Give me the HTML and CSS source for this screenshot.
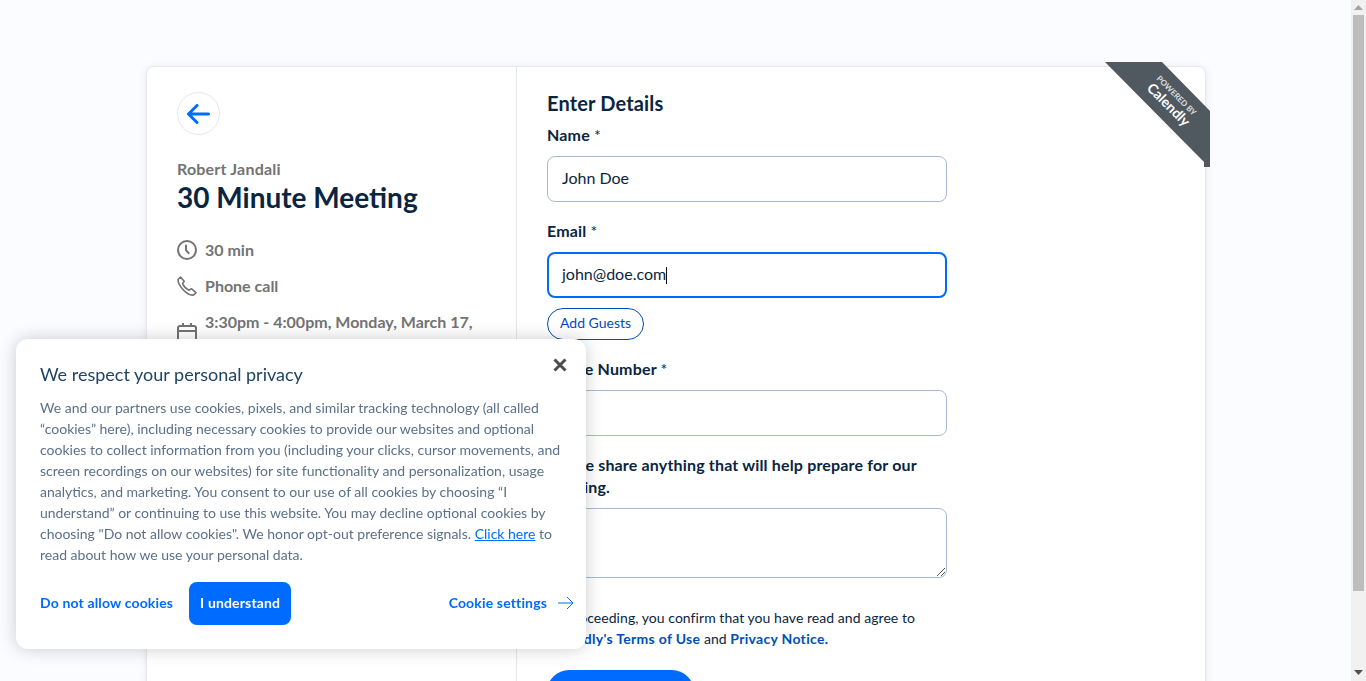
FILE: index.html
```html
<!DOCTYPE html>
<html lang="en">
<head>
  <meta charset="UTF-8" />
  <meta name="viewport" content="width=device-width, initial-scale=1" />
  <title>Enter Details - Calendly</title>
  <link rel="stylesheet" href="styles.css">
</head>
<body>
  <div class="page">
    <div class="card">
      <aside class="summary">
        <button class="back" aria-label="Back">
          <svg width="24" height="20" viewBox="0 0 24 20" fill="none" stroke="#006bff" stroke-width="3" stroke-linecap="round" stroke-linejoin="round"><path d="M1.5 10h20M10 1.5L1.5 10l8.5 8.5"/></svg>
        </button>
        <p class="host">Robert Jandali</p>
        <h1>30 Minute Meeting</h1>
        <div class="meta">
          <svg width="20" height="20" viewBox="0 0 20 20" fill="none" stroke="#737373" stroke-width="2" stroke-linecap="round"><circle cx="10" cy="10" r="9"/><path d="M9 5.5v4.7l2.6 3"/></svg>
          <span>30 min</span>
        </div>
        <div class="meta">
          <svg width="20" height="20" viewBox="0 0 20 20" fill="none" stroke="#737373" stroke-width="1.6" stroke-linejoin="round"><path d="M1 3.5 3.5 1l3.7 4.2-1.6 2.2c1 2.7 3.6 5.6 6.6 6.8l2.2-1.5 4.6 3.9-2.2 2.4c-3 .6-7.3-1.6-10.6-5.2C3 10.3 1 6.6 1 3.5z"/></svg>
          <span>Phone call</span>
        </div>
        <div class="meta meta-date">
          <svg width="20" height="20" viewBox="0 0 20 20" fill="none" stroke="#737373" stroke-width="2"><rect x="1" y="3" width="18" height="16" rx="2"/><path d="M1 8h18M6 0v4M14 0v4"/></svg>
          <span>3:30pm - 4:00pm, Monday, March 17, 2025</span>
        </div>
      </aside>

      <form class="details">
        <h2>Enter Details</h2>
        <label class="field-label">Name <i>*</i></label>
        <div class="input">John Doe</div>
        <label class="field-label">Email <i>*</i></label>
        <div class="input input-focus">john@doe.com<b class="caret"></b></div>
        <button type="button" class="add-guests">Add Guests</button>
        <label class="field-label">Phone Number <i>*</i></label>
        <div class="input"></div>
        <label class="field-label">Please share anything that will help prepare for our meeting.</label>
        <div class="input textarea">
          <svg class="grip" width="10" height="10" viewBox="0 0 10 10" stroke="#555" stroke-width="1"><path d="M1 9l8-8M5 9l4-4"/></svg>
        </div>
        <p class="terms">By proceeding, you confirm that you have read and agree to <a href="#">Calendly's Terms of Use</a> and <a href="#">Privacy Notice.</a></p>
        <button type="button" class="schedule">Schedule Event</button>
      </form>
    </div>

    <svg class="ribbon" width="105" height="105" viewBox="0 0 105 105">
      <path d="M0 0h57l48 49v56h-6v-5L0 0z" fill="#505860"/>
      <text class="ribbon-small" transform="translate(51 17) rotate(45)">POWERED BY</text>
      <text class="ribbon-big" transform="translate(41 27) rotate(45)">Calendly</text>
    </svg>
  </div>

  <div class="scrollbar">
    <svg class="arrow" width="9" height="5" viewBox="0 0 9 5"><path d="M4.5 0L9 5H0z" fill="#a3a3a3"/></svg>
    <div class="track"><div class="thumb"></div></div>
    <svg class="arrow" width="9" height="5" viewBox="0 0 9 5"><path d="M0 0h9L4.5 5z" fill="#505050"/></svg>
  </div>

  <section class="cookies">
    <button class="cookies-close" aria-label="Close">
      <svg width="14" height="14" viewBox="0 0 14 14" stroke="#4d4d4d" stroke-width="3"><path d="M1.5 1.5l11 11M12.5 1.5l-11 11"/></svg>
    </button>
    <h3>We respect your personal privacy</h3>
    <p>We and our partners use cookies, pixels, and similar tracking technology (all called “cookies” here), including necessary cookies to provide our websites and optional cookies to collect information from you (including your clicks, cursor movements, and screen recordings on our websites) for site functionality and personalization, usage analytics, and marketing. You consent to our use of all cookies by choosing “I understand” or continuing to use this website. You may decline optional cookies by choosing "Do not allow cookies". We honor opt-out preference signals. <a href="#">Click here</a> to read about how we use your personal data.</p>
    <div class="cookies-actions">
      <a class="deny" href="#">Do not allow cookies</a>
      <button class="accept">I understand</button>
      <a class="settings" href="#">Cookie settings
        <svg width="16" height="14" viewBox="0 0 16 14" fill="none" stroke="#006bff" stroke-width="1"><path d="M0 7h15M9 1l6 6-6 6"/></svg>
      </a>
    </div>
  </section>
</body>
</html>
```

FILE: styles.css
```css
* {
  box-sizing: border-box;
}
html, body {
  height: 100%;
  margin: 0;
  overflow: hidden;
}
body {
  display: flex;
  font-family: Lato, Arial, sans-serif;
  background: #fbfcff;
  color: #0a2540;
}
.page {
  flex: 1;
  position: relative;
  padding: 66px 145px 0 146px;
  overflow: hidden;
}
.card {
  display: flex;
  height: 900px;
  background: #fff;
  border: 1px solid #e6e8eb;
  border-radius: 8px;
  box-shadow: 0 1px 8px rgba(0, 0, 0, 0.08);
}
.summary {
  width: 370px;
  padding: 25px 30px;
  border-right: 1px solid #e4e7ea;
}
.back {
  display: flex;
  align-items: center;
  justify-content: center;
  width: 43px;
  height: 43px;
  padding: 0;
  margin-bottom: 23px;
  background: #fff;
  border: 1px solid #e4e7ea;
  border-radius: 50%;
}
.host {
  margin: 0 0 1px;
  font-size: 16px;
  line-height: 22px;
  font-weight: 700;
  letter-spacing: 0.2px;
  color: #737373;
}
h1 {
  margin: 0 0 26px;
  font-size: 28px;
  line-height: 32px;
  font-weight: 700;
}
.meta {
  display: flex;
  align-items: center;
  gap: 8px;
  margin-bottom: 14px;
  font-size: 16px;
  line-height: 22px;
  font-weight: 700;
  color: #737373;
}
.meta-date svg {
  flex: none;
}
.details {
  width: 460px;
  padding: 24px 30px;
}
h2 {
  margin: 0 0 9px;
  font-size: 20px;
  line-height: 24px;
  font-weight: 700;
  letter-spacing: 0.15px;
}
.field-label {
  display: block;
  margin-bottom: 10px;
  font-size: 16px;
  line-height: 22px;
  font-weight: 700;
  letter-spacing: 0.17px;
}
.field-label i {
  font-style: normal;
  font-weight: 400;
}
.input {
  position: relative;
  width: 400px;
  height: 46px;
  margin-bottom: 18px;
  padding: 0 14px;
  font-size: 16px;
  line-height: 42px;
  border: 1px solid #a6bbd1;
  border-radius: 8px;
}
.input-focus {
  margin-bottom: 10px;
  border: 2px solid #006bff;
  padding: 0 13px;
  line-height: 40px;
}
.caret {
  display: inline-block;
  width: 1px;
  height: 17px;
  background: #111;
  vertical-align: middle;
}
.add-guests {
  display: block;
  height: 32px;
  padding: 0 12px 3px;
  margin-bottom: 18px;
  font-family: inherit;
  font-size: 14px;
  color: #004eba;
  background: #fff;
  border: 1px solid #004eba;
  border-radius: 16px;
}
.textarea {
  height: 70px;
  margin-bottom: 29px;
}
.grip {
  position: absolute;
  right: 0;
  bottom: 0;
}
.terms {
  width: 400px;
  margin: 0 0 21px;
  font-size: 14px;
  line-height: 21px;
  letter-spacing: 0.05px;
}
.terms a {
  color: #004eba;
  font-weight: 700;
  letter-spacing: 0.3px;
  text-decoration: none;
}
.schedule {
  width: 147px;
  height: 50px;
  padding: 0;
  font-family: inherit;
  font-size: 15px;
  font-weight: 700;
  color: #fff;
  background: #006bff;
  border: none;
  border-radius: 22px;
}
.ribbon {
  position: absolute;
  left: 1105px;
  top: 62px;
}
.ribbon text {
  fill: #fff;
  font-family: Lato, Arial, sans-serif;
}
.ribbon-small {
  font-size: 8px;
  font-weight: 700;
  opacity: 0.8;
}
.ribbon-big {
  font-size: 14px;
  font-weight: 700;
}
.scrollbar {
  flex: none;
  width: 15px;
  display: flex;
  flex-direction: column;
  align-items: center;
  background: #f1f1f1;
  padding: 5px 0 6px;
}
.track {
  flex: 1;
  width: 100%;
  padding: 5px 2px 0;
}
.thumb {
  height: 576px;
  background: #bdbdbd;
}
.cookies {
  position: fixed;
  left: 16px;
  top: 339px;
  width: 570px;
  height: 310px;
  padding: 23px 24px;
  background: #fff;
  border-radius: 12px;
  box-shadow: 0 0 18px rgba(0, 0, 0, 0.2);
}
.cookies-close {
  position: absolute;
  right: 19px;
  top: 19px;
  padding: 0;
  width: 14px;
  height: 14px;
  background: none;
  border: none;
}
h3 {
  margin: 0 0 11px;
  font-size: 18px;
  line-height: 24px;
  font-weight: 400;
  color: #1f4364;
}
.cookies p {
  margin: 0 0 17px;
  font-size: 14px;
  line-height: 21px;
  color: #5b7189;
}
.cookies p a {
  color: #006bff;
}
.cookies-actions {
  display: flex;
  align-items: center;
  gap: 16px;
  font-size: 14px;
  font-weight: 700;
  letter-spacing: 0.15px;
}
.cookies-actions a {
  padding-bottom: 2px;
  color: #006bff;
  text-decoration: none;
}
.accept {
  width: 102px;
  height: 43px;
  padding: 0 0 2px;
  font-family: inherit;
  font-size: 14px;
  font-weight: 700;
  letter-spacing: 0.15px;
  color: #fff;
  background: #006bff;
  border: none;
  border-radius: 8px;
}
.settings {
  display: flex;
  align-items: center;
  gap: 11px;
  margin-left: auto;
  margin-right: -12px;
}
```
